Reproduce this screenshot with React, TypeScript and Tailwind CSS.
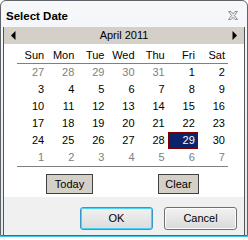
import React from "react";

const days = ["Sun", "Mon", "Tue", "Wed", "Thu", "Fri", "Sat"];

// 6 weeks shown for April 2011, leading/trailing days are from the other months
const weeks: { d: number; other?: boolean }[][] = [
  [{ d: 27, other: true }, { d: 28, other: true }, { d: 29, other: true }, { d: 30, other: true }, { d: 31, other: true }, { d: 1 }, { d: 2 }],
  [{ d: 3 }, { d: 4 }, { d: 5 }, { d: 6 }, { d: 7 }, { d: 8 }, { d: 9 }],
  [{ d: 10 }, { d: 11 }, { d: 12 }, { d: 13 }, { d: 14 }, { d: 15 }, { d: 16 }],
  [{ d: 17 }, { d: 18 }, { d: 19 }, { d: 20 }, { d: 21 }, { d: 22 }, { d: 23 }],
  [{ d: 24 }, { d: 25 }, { d: 26 }, { d: 27 }, { d: 28 }, { d: 29 }, { d: 30 }],
  [{ d: 1, other: true }, { d: 2, other: true }, { d: 3, other: true }, { d: 4, other: true }, { d: 5, other: true }, { d: 6, other: true }, { d: 7, other: true }],
];

const selected = 29;

export default function App() {
  return (
    <div className="w-[248px] h-[240px] bg-white font-['Liberation_Sans',Arial,sans-serif] text-black">
      <div className="h-[236px] flex flex-col rounded-t-[6px] border border-[#5f6368] bg-gradient-to-b from-[#f6f8fa] to-[#e4e9ef] px-[2px]">
        {/* title bar */}
        <div className="h-[26px] flex items-start justify-between pl-[3px] pr-[7px]">
          <span className="pt-[9px] text-[11.5px] leading-[13px] font-bold">Select Date</span>
          <svg width="10" height="9" viewBox="0 0 10 9" className="mt-[10px]">
            <path
              d="M0.5 0.5 H3 L5 2.8 L7 0.5 H9.5 L6.4 4.5 L9.5 8.5 H7 L5 6.2 L3 8.5 H0.5 L3.6 4.5 Z"
              fill="#eceef1"
              stroke="#8c9096"
              strokeWidth="1"
            />
          </svg>
        </div>

        {/* client area */}
        <div className="flex-1 flex flex-col border-x border-[#555555]">
          <div className="h-[170px] bg-white flex flex-col">
            <div className="h-[17px] bg-[#d4d0c8] flex items-center justify-between px-[7px]">
              <svg width="5" height="9" viewBox="0 0 5 9">
                <path d="M4.5 0 V9 L0 4.5 Z" fill="#000" />
              </svg>
              <span className="text-[11px] leading-[17px]">April 2011</span>
              <svg width="5" height="9" viewBox="0 0 5 9">
                <path d="M0.5 0 V9 L5 4.5 Z" fill="#000" />
              </svg>
            </div>

            <div className="ml-[13px] w-[211px]">
              <div className="grid grid-cols-7 h-[20px] pt-[5px] border-b border-[#808080]">
                {days.map((d) => (
                  <div key={d} className="text-right pr-[3px] text-[11px] leading-[13px]">
                    {d}
                  </div>
                ))}
              </div>
              <div className="border-b border-[#808080]">
                {weeks.map((w, i) => (
                  <div key={i} className="grid grid-cols-7">
                    {w.map((c, j) => {
                      const sel = !c.other && c.d === selected;
                      return (
                        <div
                          key={j}
                          className={`h-[17px] text-right pr-[3px] text-[11px] leading-[17px] ${
                            sel
                              ? "bg-[#0a246a] text-white outline outline-1 -outline-offset-1 outline-[#800000]"
                              : c.other
                              ? "text-[#808080]"
                              : "text-black"
                          }`}
                        >
                          {c.d}
                        </div>
                      );
                    })}
                  </div>
                ))}
              </div>
              <div className="flex pt-[7px]">
                <button className="ml-[29px] w-[47px] h-[20px] bg-[#d4d0c8] border border-[#404040] text-[11px] leading-[18px]">
                  Today
                </button>
                <button className="ml-[65px] w-[41px] h-[20px] bg-[#d4d0c8] border border-[#404040] text-[11px] leading-[18px]">
                  Clear
                </button>
              </div>
            </div>
          </div>

          <div className="flex-1 bg-[#f0f0f0] flex justify-end items-start pt-[10px] pr-[7px] gap-[11px]">
            <button className="w-[73px] h-[23px] rounded-[3px] border border-[#3399cc] bg-gradient-to-b from-[#f2f2f2] to-[#dcdcdc] shadow-[inset_0_0_0_1px_#48d4f4] text-[11px] leading-[21px]">
              OK
            </button>
            <button className="w-[73px] h-[23px] rounded-[3px] border border-[#707070] bg-gradient-to-b from-[#f2f2f2] to-[#dadada] shadow-[inset_0_0_0_1px_#fcfcfc] text-[11px] leading-[21px]">
              Cancel
            </button>
          </div>
        </div>
      </div>
      <div className="h-[1px] bg-[#3ec3e0]" />
    </div>
  );
}
